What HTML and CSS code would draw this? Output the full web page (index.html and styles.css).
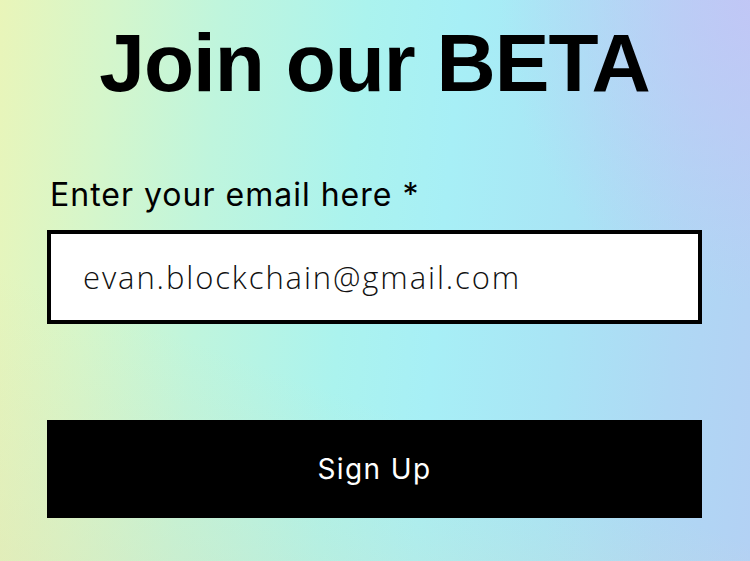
FILE: index.html
```html
<!DOCTYPE html>
<html>
<head>
<meta charset="utf-8">
<link rel="stylesheet" href="styles.css">
</head>
<body>
<main class="page">
  <h1 class="title">Join our BETA</h1>
  <form class="form">
    <label class="label" for="email">Enter your email here *</label>
    <div class="input-box">
      <input id="email" class="input" type="text" value="evan.blockchain@gmail.com">
    </div>
    <button class="btn" type="button">Sign Up</button>
  </form>
</main>
</body>
</html>
```
FILE: styles.css
```css
html, body {
  margin: 0;
  padding: 0;
  width: 750px;
  height: 561px;
  overflow: hidden;
}
body {
  background:
    radial-gradient(ellipse 260px 300px at 760px 0px, rgba(196, 196, 246, 0.85) 0%, rgba(196, 196, 246, 0) 100%),
    linear-gradient(20deg, rgba(228, 222, 172, 0.35) 0%, rgba(228, 222, 172, 0) 35%),
    linear-gradient(95deg, #e9f5b9 0%, #d5f6cb 14%, #bff5dd 28%, #abf3ee 46%, #a7eff6 58%, #a9e4f5 74%, #afd8f4 88%, #b3d1f4 100%);
  font-family: "Liberation Sans", Arial, sans-serif;
  color: #000;
}
.page {
  display: flex;
  flex-direction: column;
  padding: 22px 48px 0 47px;
}
.title {
  margin: 0;
  font-size: 82px;
  line-height: 82px;
  font-weight: 700;
  letter-spacing: -1px;
  text-align: center;
}
.form {
  display: flex;
  flex-direction: column;
  margin-top: 74px;
}
.label {
  font-family: "Inter", "Liberation Sans", sans-serif;
  font-size: 32px;
  line-height: 33px;
  margin-left: 3px;
  letter-spacing: 1px;
}
.input-box {
  margin-top: 19px;
  height: 94px;
  box-sizing: border-box;
  border: 4px solid #000;
  background: #fff;
  display: flex;
  align-items: center;
}
.input {
  border: 0;
  outline: none;
  background: transparent;
  width: 100%;
  padding: 0 0 0 32px;
  font-family: "Open Sans", "Lato", sans-serif;
  font-weight: 300;
  font-size: 31px;
  letter-spacing: 1.9px;
  color: #111;
}
.btn {
  margin-top: 96px;
  height: 98px;
  border: 0;
  background: #000;
  color: #fff;
  font-family: "Inter", "Liberation Sans", sans-serif;
  font-size: 28px;
  letter-spacing: 1.4px;
  padding: 0;
  cursor: pointer;
}
```
